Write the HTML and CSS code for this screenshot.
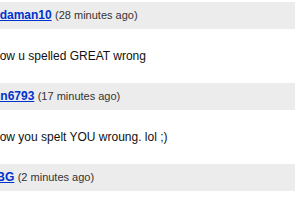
FILE: index.html
```html
<!DOCTYPE html>
<html lang="en">
<head>
<meta charset="UTF-8">
<title>Comments</title>
<link rel="stylesheet" href="styles.css">
</head>
<body>
<div class="comments">
    <div class="comment">
        <div class="comment-head"><a href="#" class="user">edaman10</a> <span class="time">(28 minutes ago)</span></div>
        <div class="comment-body">how u spelled GREAT wrong</div>
    </div>
    <div class="comment">
        <div class="comment-head"><a href="#" class="user">nn6793</a> <span class="time">(17 minutes ago)</span></div>
        <div class="comment-body">how you spelt YOU wroung. lol ;)</div>
    </div>
    <div class="comment">
        <div class="comment-head"><a href="#" class="user">iBG</a> <span class="time">(2 minutes ago)</span></div>
        <div class="comment-body">&nbsp;</div>
    </div>
</div>
</body>
</html>
```

FILE: styles.css
```css
body {
    margin: 0;
    padding-top: 2px;
    font-family: "Liberation Sans", Arial, sans-serif;
    background-color: #fff;
    overflow: hidden;
}

.comments {
    margin-left: -7px;
}

.comment-head {
    background-color: #ececec;
    height: 27px;
    line-height: 27px;
    font-size: 12px;
}

.user {
    color: #0033cc;
    font-weight: bold;
}

.time {
    font-size: 11px;
    color: #333;
}

.comment-body {
    font-size: 12px;
    color: #111;
    line-height: 14px;
    padding: 20px 0;
}
```
